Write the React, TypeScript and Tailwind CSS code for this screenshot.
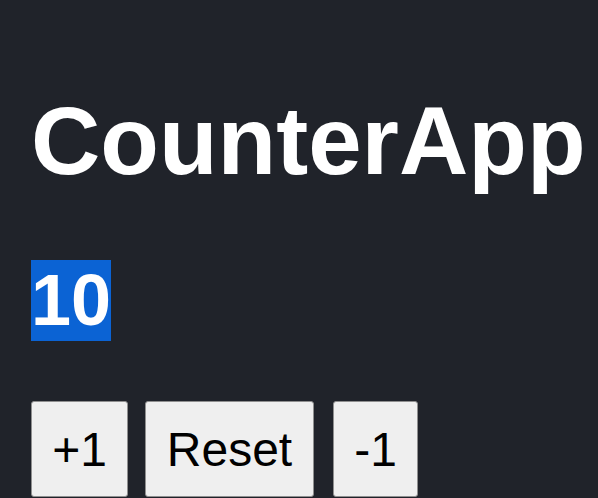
import { useState } from 'react';

export default function App() {
  const [count, setCount] = useState(10);

  const buttonClass =
    'h-[96px] px-5 bg-[#efefef] border border-[#8f8f8f] rounded-[3px] text-black text-[48px] leading-[55px]';

  return (
    <div className="min-h-screen bg-[#20232a] pl-[31px] pt-[86px] font-['Liberation_Sans',Arial,sans-serif]">
      <h1 className="text-[96px] font-bold leading-[110px] text-white">CounterApp</h1>
      <div className="mt-16">
        <span className="inline-block bg-[#0b63d4] text-white text-[72px] font-bold leading-[81px]">{count}</span>
      </div>
      <div className="mt-[60px] flex items-start">
        <button onClick={() => setCount(c => c + 1)} className={`${buttonClass} w-[97px]`}>
          +1
        </button>
        <button onClick={() => setCount(0)} className={`${buttonClass} ml-[17px] w-[169px]`}>
          Reset
        </button>
        <button onClick={() => setCount(c => c - 1)} className={`${buttonClass} ml-[19px] w-[85px]`}>
          -1
        </button>
      </div>
    </div>
  );
}
